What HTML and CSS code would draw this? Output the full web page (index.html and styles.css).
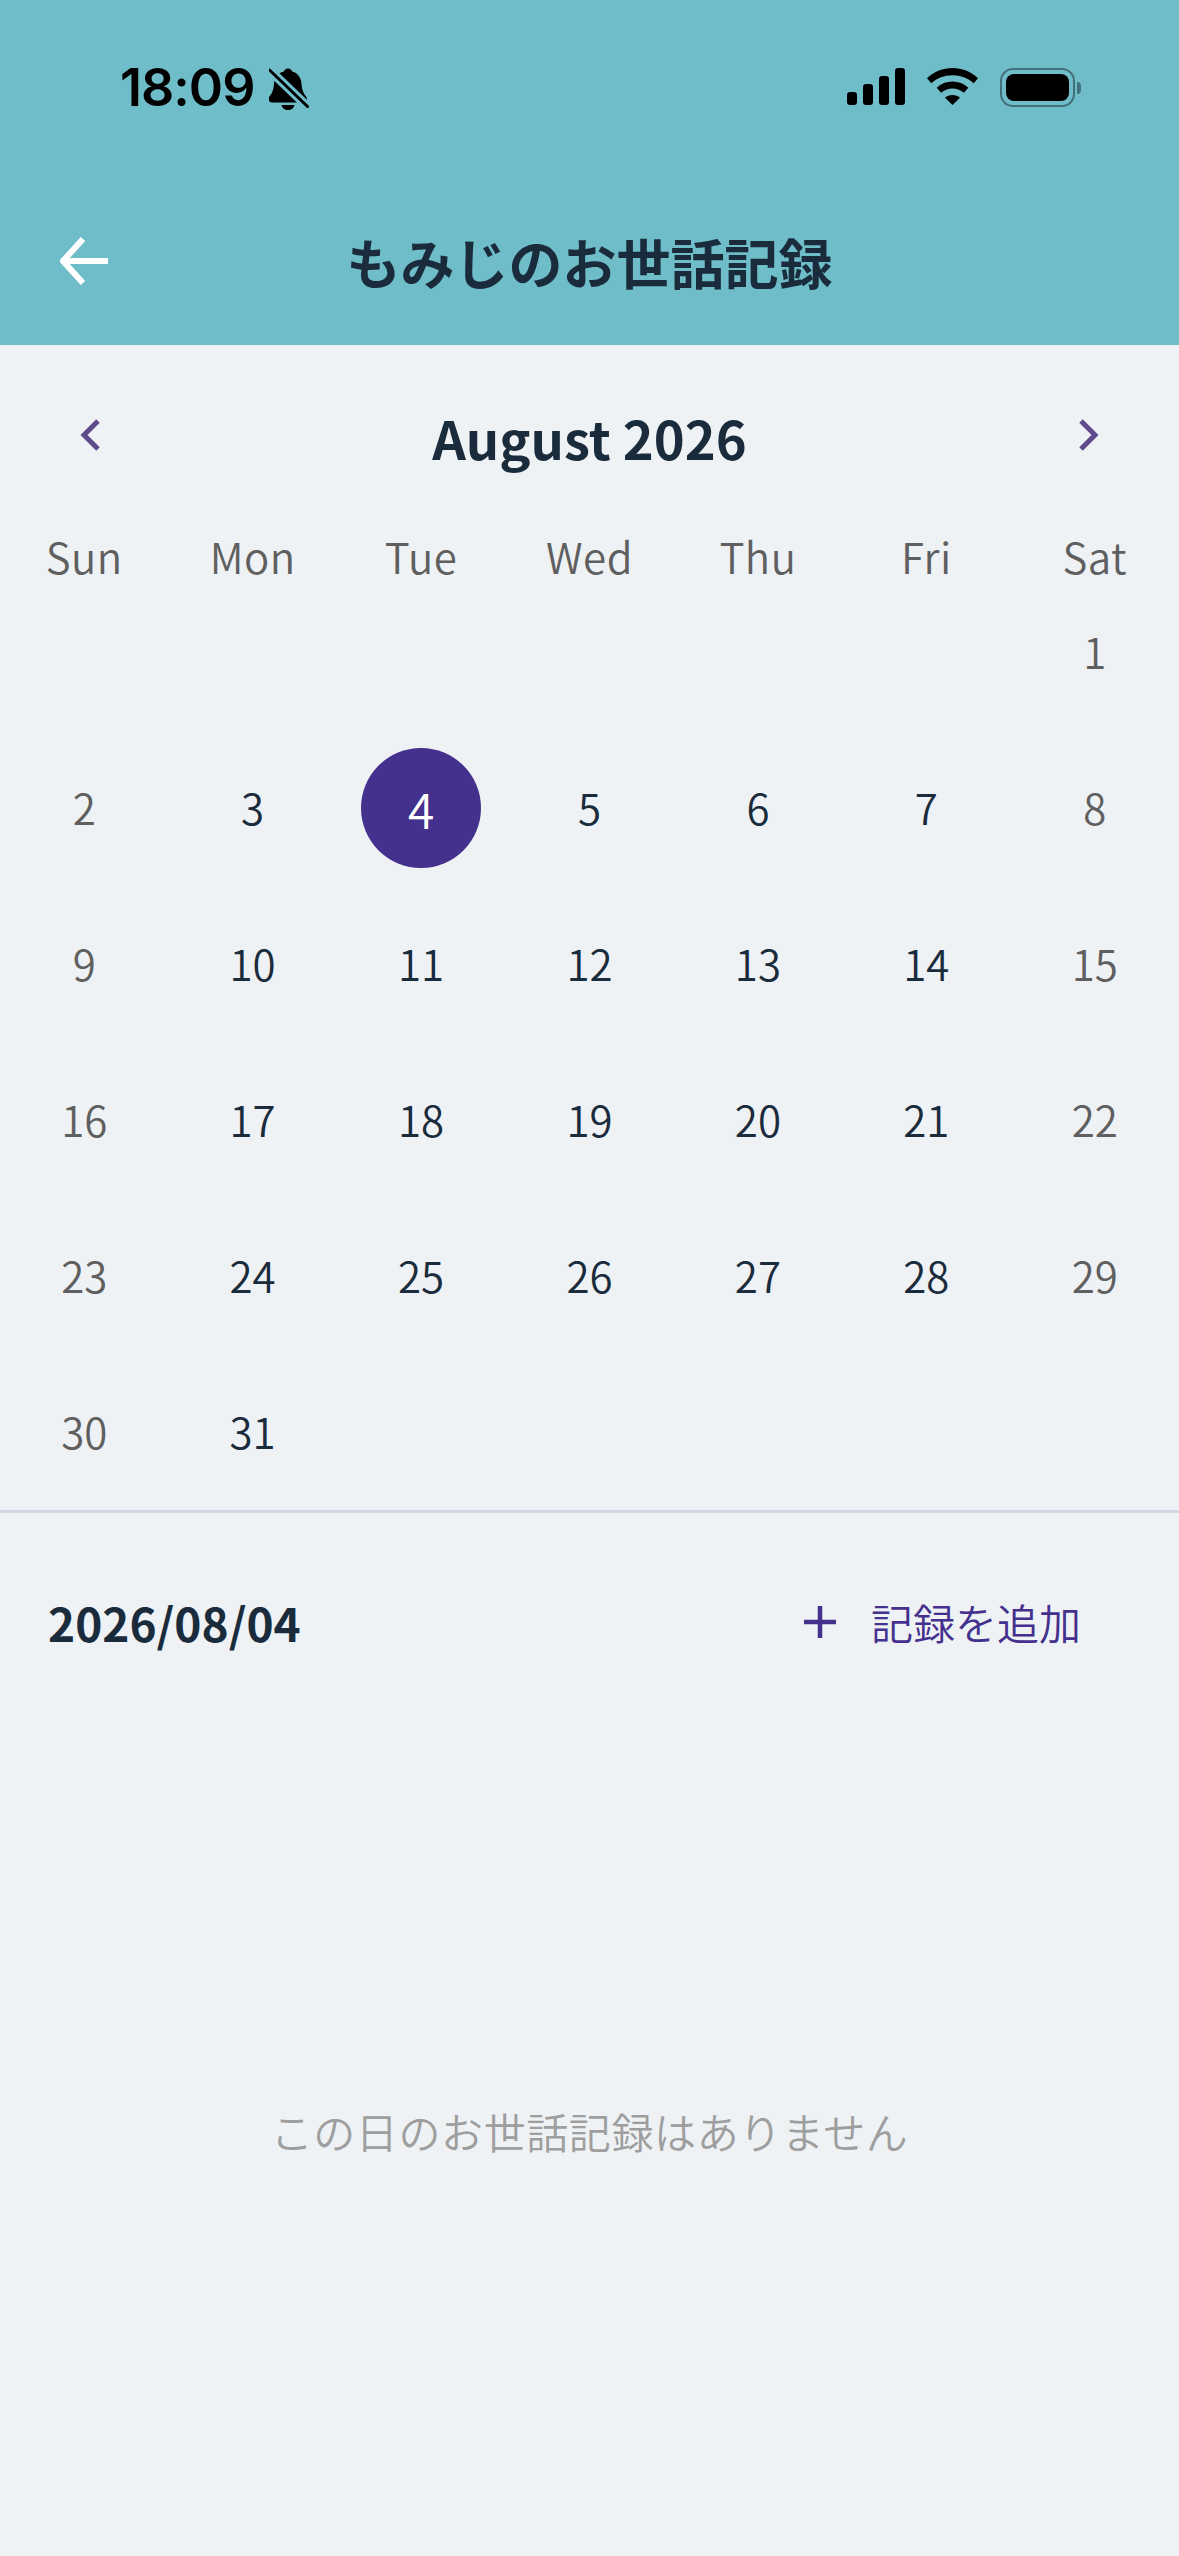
FILE: index.html
```html
<!DOCTYPE html>
<html lang="ja">
<head>
    <meta charset="UTF-8">
    <meta name="viewport" content="width=device-width, initial-scale=1.0">
    <title>もみじのお世話記録</title>
    <link rel="stylesheet" href="styles.css">
</head>
<body>

<!-- Header -->
<div class="header">
    <div class="status-bar">
        <div class="status-left">
            <span class="time">18:09</span>
            <svg class="bell" width="40" height="42" viewBox="0 0 40 42">
                <path d="M19 .5c2.200 0 3.800 1.600 4.200 3 6 1.800 9 6.500 9.300 12.500.3 5 1.500 9 4.500 12.500 2 2.300.7 6-2.500 6H3c-3.200 0-4.500-3.700-2.500-6 3-3.500 4.200-7.500 4.500-12.500C5.300 10 8.300 5.300 14.800 3.500c.4-1.400 2-3 4.200-3z"/>
                <path d="M12.500 37h13c-.5 3-3.300 5-6.500 5s-6-2-6.500-5z"/>
                <path d="M.5 2l38 36.500" fill="none" stroke="#6fbdc8" stroke-width="9"/>
                <path d="M.5 2l38 36.500" fill="none" stroke="#000" stroke-width="3" stroke-linecap="round"/>
            </svg>
        </div>
        <div class="status-right">
            <svg width="58" height="37" viewBox="0 0 58 37">
                <rect x="0" y="24" width="10" height="13" rx="3"/>
                <rect x="16" y="16" width="10" height="21" rx="3"/>
                <rect x="32" y="8" width="10" height="29" rx="3"/>
                <rect x="48" y="0" width="10" height="37" rx="3"/>
            </svg>
            <svg width="51" height="37" viewBox="0 0 51 37">
                <path d="M25.500 0C35 0 43.700 3.600 51 10.200l-4.300 5C41 10 33.600 7.200 25.500 7.200S10 10 4.300 15.200L0 10.200C7.300 3.600 16 0 25.500 0z"/>
                <path d="M25.500 13.500c6 0 11.500 2.200 15.800 6.300l-4.400 5c-3.100-2.800-7-4.400-11.400-4.400s-8.300 1.600-11.400 4.400l-4.400-5C14 15.700 19.500 13.500 25.500 13.500z"/>
                <path d="M25.500 27c2.900 0 5.500 1 7.500 2.800L25.500 37 18 29.800C20 28 22.600 27 25.500 27z"/>
            </svg>
            <div class="battery">
                <div class="battery-body"><div class="battery-fill"></div></div>
                <div class="battery-tip"></div>
            </div>
        </div>
    </div>
    <div class="app-bar">
        <svg class="back" width="48" height="48" viewBox="0 0 48 48">
            <path d="M48 24H3M23 2L3 24l20 22" fill="none" stroke="#fff" stroke-width="6"/>
        </svg>
        <div class="app-title">もみじのお世話記録</div>
    </div>
</div>

<!-- Calendar -->
<div class="month-row">
    <svg class="chevron" width="20" height="32" viewBox="0 0 20 32">
        <path d="M18 2L4 16l14 14" fill="none" stroke="#5f4b8b" stroke-width="5"/>
    </svg>
    <div class="month-title">August 2026</div>
    <svg class="chevron" width="20" height="32" viewBox="0 0 20 32">
        <path d="M2 2l14 14L2 30" fill="none" stroke="#5f4b8b" stroke-width="5"/>
    </svg>
</div>

<div class="week-row">
    <div>Sun</div><div>Mon</div><div>Tue</div><div>Wed</div><div>Thu</div><div>Fri</div><div>Sat</div>
</div>

<div class="days">
    <div></div><div></div><div></div><div></div><div></div><div></div><div class="day off">1</div>
    <div class="day off">2</div><div class="day">3</div><div class="day"><span class="selected">4</span></div><div class="day">5</div><div class="day">6</div><div class="day">7</div><div class="day off">8</div>
    <div class="day off">9</div><div class="day">10</div><div class="day">11</div><div class="day">12</div><div class="day">13</div><div class="day">14</div><div class="day off">15</div>
    <div class="day off">16</div><div class="day">17</div><div class="day">18</div><div class="day">19</div><div class="day">20</div><div class="day">21</div><div class="day off">22</div>
    <div class="day off">23</div><div class="day">24</div><div class="day">25</div><div class="day">26</div><div class="day">27</div><div class="day">28</div><div class="day off">29</div>
    <div class="day off">30</div><div class="day">31</div><div></div><div></div><div></div><div></div><div></div>
</div>

<!-- Records -->
<div class="record-head">
    <div class="record-date">2026/08/04</div>
    <div class="add-button">
        <svg width="32" height="32" viewBox="0 0 32 32">
            <path d="M16 0v32M0 16h32" fill="none" stroke="#44308d" stroke-width="4.500"/>
        </svg>
        <span>記録を追加</span>
    </div>
</div>

<div class="empty">この日のお世話記録はありません</div>

</body>
</html>
```

FILE: styles.css
```css
/* Basic Reset */
html, body {
    margin: 0;
    padding: 0;
}

body {
    display: flex;
    flex-direction: column;
    height: 2556px;
    background-color: #eef2f5;
    color: #1a2b3c;
    font-family: "Noto Sans CJK JP", "Noto Sans", sans-serif;
}

/* Header */
.header {
    height: 345px;
    background-color: #6fbdc8;
}

.status-bar {
    display: flex;
    justify-content: space-between;
    height: 177px;
    padding: 68px 98px 0 120px;
    box-sizing: border-box;
}

.status-left {
    display: flex;
    align-items: flex-start;
    gap: 15px;
}

.time {
    font-family: Inter, sans-serif;
    font-size: 52px;
    font-weight: 600;
    line-height: 40px;
    letter-spacing: -1px;
    color: #000;
}

.status-right {
    display: flex;
    align-items: flex-start;
    gap: 22px;
}

.battery {
    display: flex;
    align-items: center;
    height: 39px;
    gap: 2px;
}

.battery-body {
    width: 75px;
    height: 39px;
    padding: 4px;
    box-sizing: border-box;
    border: 2px solid #44707c;
    border-radius: 13px;
}

.battery-fill {
    height: 100%;
    background-color: #000;
    border-radius: 8px;
}

.battery-tip {
    width: 4px;
    height: 12px;
    background-color: #44707c;
    border-radius: 0 4px 4px 0;
}

.app-bar {
    display: flex;
    align-items: center;
    justify-content: center;
    height: 168px;
    position: relative;
}

.back {
    position: absolute;
    left: 60px;
    top: 60px;
}

.app-title {
    font-size: 54px;
    font-weight: 700;
}

/* Calendar */
.month-row {
    display: flex;
    justify-content: space-between;
    align-items: center;
    height: 183px;
    padding: 0 80px;
    box-sizing: border-box;
}

.chevron {
    margin-top: -3px;
}

.month-title {
    font-size: 52.500px;
    font-weight: 700;
}

.week-row {
    display: grid;
    grid-template-columns: repeat(7, 1fr);
    height: 46px;
    padding-top: 5px;
    margin-bottom: -5px;
    font-size: 42px;
    font-weight: 350;
    line-height: 46px;
    letter-spacing: 0.5px;
    text-align: center;
    color: #5f5f5f;
}

.days {
    display: grid;
    grid-template-columns: repeat(7, 1fr);
    grid-auto-rows: 156px;
    border-bottom: 3px solid #cfd8e3;
    font-weight: 350;
}

.day {
    display: flex;
    align-items: center;
    justify-content: center;
    padding-bottom: 3px;
    box-sizing: border-box;
    font-size: 42px;
}

.day.off {
    color: #5f5f5f;
}

.selected {
    display: flex;
    align-items: center;
    justify-content: center;
    width: 120px;
    height: 120px;
    margin-top: 3px;
    border-radius: 50%;
    background-color: #44308d;
    color: white;
    font-size: 48px;
}

/* Records */
.record-head {
    display: flex;
    justify-content: space-between;
    align-items: center;
    height: 197px;
    padding: 20px 98px 0 48px;
    box-sizing: border-box;
}

.record-date {
    font-size: 46px;
    font-weight: 700;
}

.add-button {
    display: flex;
    align-items: center;
    gap: 35px;
    font-size: 42px;
    font-weight: 350;
    color: #44308d;
}

.empty {
    flex: 1;
    display: flex;
    align-items: center;
    justify-content: center;
    padding-bottom: 6px;
    font-size: 42px;
    font-weight: 350;
    letter-spacing: 0.6px;
    color: #9e9e9e;
}
```
